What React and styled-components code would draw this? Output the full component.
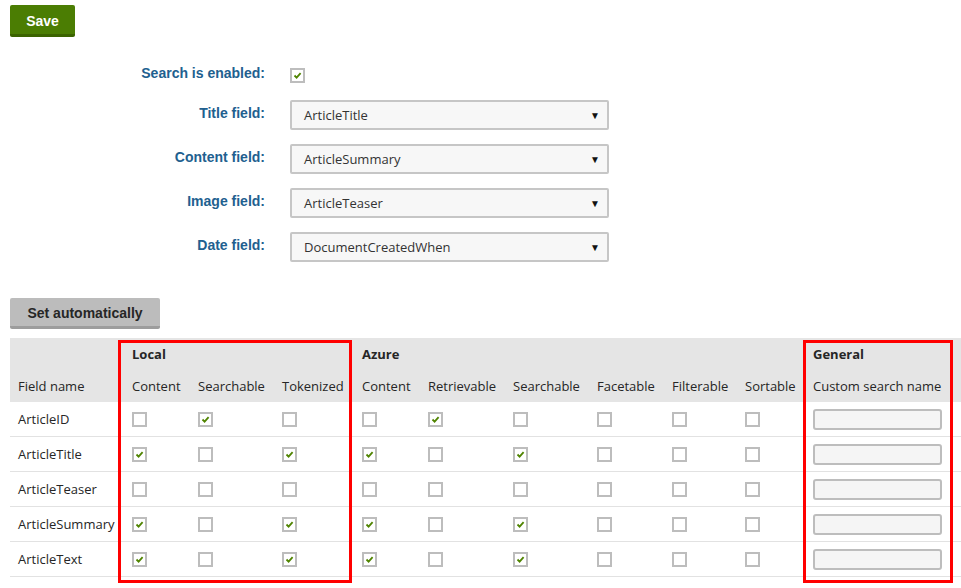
import React from 'react';
import styled, { createGlobalStyle } from 'styled-components';

const GlobalStyle = createGlobalStyle`
    html, body {
        margin: 0;
        padding: 0;
        background: #fff;
        overflow: hidden;
    }
    body {
        font-family: "Open Sans", "Liberation Sans", sans-serif;
        color: #262626;
    }
`;

const COLUMNS = '114px 66px 84px 80px 66px 85px 84px 75px 73px 68px 170px';

const Page = styled.div`
    width: 961px;
    height: 588px;
    padding: 5px 0 0 10px;
    box-sizing: border-box;
    overflow: hidden;
`;

const PrimaryButton = styled.button`
    display: block;
    width: 65px;
    height: 32px;
    padding: 2px 0 0;
    border: none;
    border-bottom: 3px solid #3b6300;
    border-radius: 2px;
    background: #4b7d03;
    color: #fff;
    font-family: "Liberation Sans", Arial, sans-serif;
    font-weight: bold;
    font-size: 14px;
`;

const SecondaryButton = styled(PrimaryButton)`
    width: 150px;
    height: 31px;
    margin-top: 36px;
    background: #bcbcbc;
    border-bottom-color: #9d9d9d;
    color: #262626;
`;

const Form = styled.div`
    display: grid;
    grid-template-columns: 255px 319px;
    grid-template-rows: 22px repeat(4, 30px);
    column-gap: 25px;
    row-gap: 14px;
    margin-top: 27px;
`;

const Label = styled.label`
    align-self: center;
    justify-self: end;
    padding-bottom: 4px;
    font-family: "Liberation Sans", Arial, sans-serif;
    font-weight: bold;
    font-size: 14px;
    color: #21608f;
`;

const FieldCell = styled.div`
    display: flex;
    align-items: center;
`;

const Select = styled.div`
    display: flex;
    align-items: center;
    justify-content: space-between;
    width: 100%;
    height: 30px;
    box-sizing: border-box;
    padding: 0 6px 0 12px;
    border: 2px solid #c6c6c6;
    border-radius: 2px;
    background: #f7f7f7;
    font-size: 13px;
    color: #333;
`;

const Arrow = styled.span`
    font-size: 10px;
    color: #111;
    padding-right: 1px;
`;

const Box = styled.span`
    display: inline-flex;
    align-items: center;
    justify-content: center;
    width: 15px;
    height: 15px;
    box-sizing: border-box;
    border: 2px solid #bdbdbd;
    background: #fff;
`;

const Check = ({ checked }) => (
    <Box>
        {checked && (
            <svg width="11" height="11" viewBox="0 0 11 11">
                <polyline points="2.5,5.5 4.6,7.6 8.6,3.2" fill="none" stroke="#4f8400" strokeWidth="1.8" />
            </svg>
        )}
    </Box>
);

const TableWrap = styled.div`
    position: relative;
    margin-top: 9px;
    width: 965px;
`;

const HeaderBand = styled.div`
    display: grid;
    grid-template-columns: ${COLUMNS};
    grid-template-rows: 32px 32px;
    background: #e5e5e5;
`;

const HeadCell = styled.div`
    display: flex;
    align-items: center;
    padding-left: 8px;
    font-size: 13px;
    font-weight: ${(p) => (p.$group ? 700 : 400)};
    padding-bottom: ${(p) => (p.$group ? '0' : '1px')};
    grid-column: ${(p) => p.$span ? `span ${p.$span}` : 'auto'};
    white-space: nowrap;
`;

const Row = styled.div`
    display: grid;
    grid-template-columns: ${COLUMNS};
    height: 35px;
    border-bottom: 1px solid #e2e2e2;
    box-sizing: border-box;
`;

const Cell = styled.div`
    display: flex;
    align-items: center;
    padding-left: 8px;
    font-size: 13px;
    white-space: nowrap;
`;

const TextInput = styled.div`
    width: 129px;
    height: 21px;
    box-sizing: border-box;
    border: 2px solid #bdbdbd;
    border-radius: 3px;
    background: #f5f5f5;
`;

const Highlight = styled.div`
    position: absolute;
    top: 2px;
    left: ${(p) => p.$left}px;
    width: ${(p) => p.$width}px;
    height: 243px;
    box-sizing: border-box;
    border: 3px solid #ff0000;
    pointer-events: none;
`;

const selects = [
    ['Title field:', 'ArticleTitle'],
    ['Content field:', 'ArticleSummary'],
    ['Image field:', 'ArticleTeaser'],
    ['Date field:', 'DocumentCreatedWhen'],
];

const subHeads = ['Field name', 'Content', 'Searchable', 'Tokenized', 'Content', 'Retrievable', 'Searchable', 'Facetable', 'Filterable', 'Sortable', 'Custom search name'];

const fields = [
    { name: 'ArticleID', flags: [0, 1, 0, 0, 1, 0, 0, 0, 0] },
    { name: 'ArticleTitle', flags: [1, 0, 1, 1, 0, 1, 0, 0, 0] },
    { name: 'ArticleTeaser', flags: [0, 0, 0, 0, 0, 0, 0, 0, 0] },
    { name: 'ArticleSummary', flags: [1, 0, 1, 1, 0, 1, 0, 0, 0] },
    { name: 'ArticleText', flags: [1, 0, 1, 1, 0, 1, 0, 0, 0] },
];

const App = () => (
    <Page>
        <GlobalStyle />
        <PrimaryButton>Save</PrimaryButton>
        <Form>
            <Label>Search is enabled:</Label>
            <FieldCell><Check checked /></FieldCell>
            {selects.map(([label, value]) => (
                <React.Fragment key={label}>
                    <Label>{label}</Label>
                    <Select>
                        <span>{value}</span>
                        <Arrow>▼</Arrow>
                    </Select>
                </React.Fragment>
            ))}
        </Form>
        <SecondaryButton>Set automatically</SecondaryButton>
        <TableWrap>
            <HeaderBand>
                <HeadCell />
                <HeadCell $group $span={3}>Local</HeadCell>
                <HeadCell $group $span={6}>Azure</HeadCell>
                <HeadCell $group>General</HeadCell>
                {subHeads.map((h, i) => (
                    <HeadCell key={i}>{h}</HeadCell>
                ))}
            </HeaderBand>
            {fields.map((f) => (
                <Row key={f.name}>
                    <Cell>{f.name}</Cell>
                    {f.flags.map((v, i) => (
                        <Cell key={i}><Check checked={!!v} /></Cell>
                    ))}
                    <Cell><TextInput /></Cell>
                </Row>
            ))}
            <Highlight $left={108} $width={234} />
            <Highlight $left={793} $width={150} />
        </TableWrap>
    </Page>
);

export default App;
